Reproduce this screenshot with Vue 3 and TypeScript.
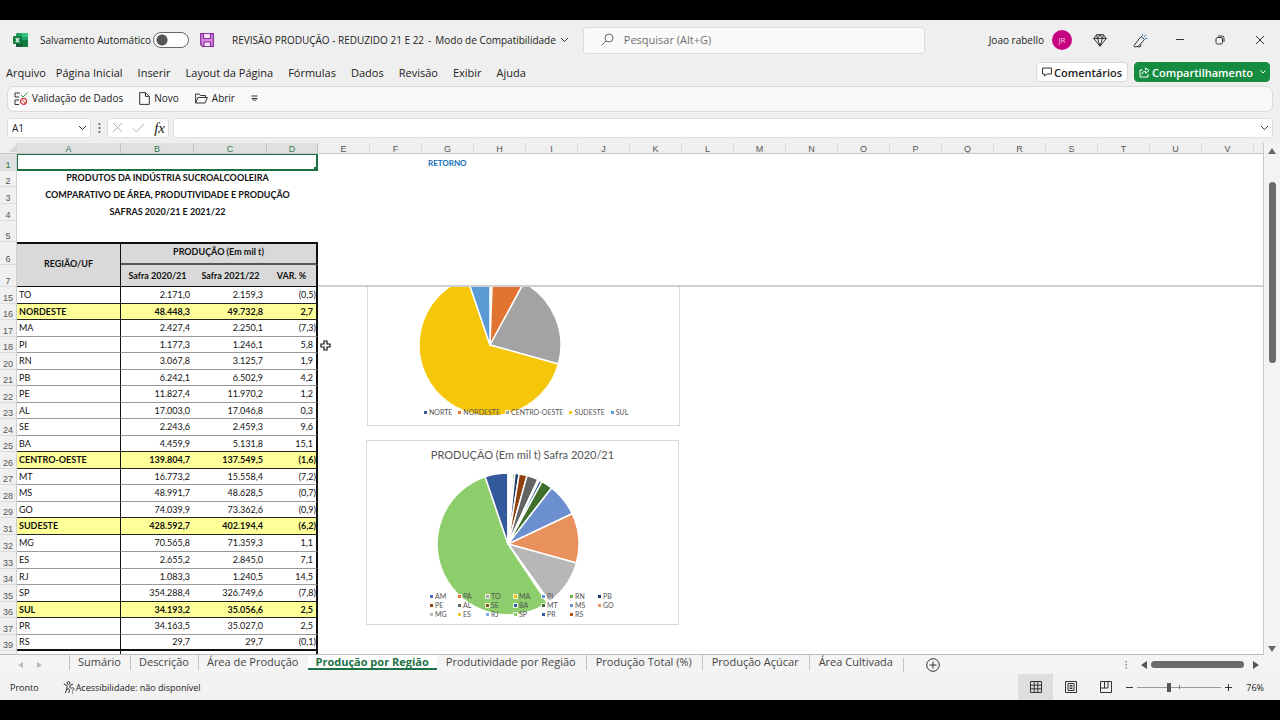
<script setup lang="ts">
import { ref } from 'vue'

interface DataRow {
  n: number
  name: string
  a: string
  b: string
  v: string
  region?: boolean
}
interface Slice {
  label: string
  value: number
  color: string
}

const menus = ['Página Inicial', 'Inserir', 'Layout da Página', 'Fórmulas', 'Dados', 'Revisão', 'Exibir', 'Ajuda']
const otherColumns = 'EFGHIJKLMNOPQRSTUV'.split('')
const sheets = [
  'Sumário',
  'Descrição',
  'Área de Produção',
  'Produção por Região',
  'Produtividade por Região',
  'Produção Total (%)',
  'Produção Açúcar',
  'Área Cultivada',
]
const activeSheet = ref('Produção por Região')
const cellName = ref('A1')
const formula = ref('')
const search = ref('')
const autosave = ref(false)
const zoom = ref(76)

const rows: DataRow[] = [
  { n: 15, name: 'TO', a: '2.171,0', b: '2.159,3', v: '(0,5)' },
  { n: 16, name: 'NORDESTE', a: '48.448,3', b: '49.732,8', v: '2,7', region: true },
  { n: 17, name: 'MA', a: '2.427,4', b: '2.250,1', v: '(7,3)' },
  { n: 18, name: 'PI', a: '1.177,3', b: '1.246,1', v: '5,8' },
  { n: 20, name: 'RN', a: '3.067,8', b: '3.125,7', v: '1,9' },
  { n: 21, name: 'PB', a: '6.242,1', b: '6.502,9', v: '4,2' },
  { n: 22, name: 'PE', a: '11.827,4', b: '11.970,2', v: '1,2' },
  { n: 23, name: 'AL', a: '17.003,0', b: '17.046,8', v: '0,3' },
  { n: 24, name: 'SE', a: '2.243,6', b: '2.459,3', v: '9,6' },
  { n: 25, name: 'BA', a: '4.459,9', b: '5.131,8', v: '15,1' },
  { n: 26, name: 'CENTRO-OESTE', a: '139.804,7', b: '137.549,5', v: '(1,6)', region: true },
  { n: 27, name: 'MT', a: '16.773,2', b: '15.558,4', v: '(7,2)' },
  { n: 28, name: 'MS', a: '48.991,7', b: '48.628,5', v: '(0,7)' },
  { n: 29, name: 'GO', a: '74.039,9', b: '73.362,6', v: '(0,9)' },
  { n: 31, name: 'SUDESTE', a: '428.592,7', b: '402.194,4', v: '(6,2)', region: true },
  { n: 32, name: 'MG', a: '70.565,8', b: '71.359,3', v: '1,1' },
  { n: 33, name: 'ES', a: '2.655,2', b: '2.845,0', v: '7,1' },
  { n: 34, name: 'RJ', a: '1.083,3', b: '1.240,5', v: '14,5' },
  { n: 35, name: 'SP', a: '354.288,4', b: '326.749,6', v: '(7,8)' },
  { n: 36, name: 'SUL', a: '34.193,2', b: '35.056,6', v: '2,5', region: true },
  { n: 37, name: 'PR', a: '34.163,5', b: '35.027,0', v: '2,5' },
  { n: 39, name: 'RS', a: '29,7', b: '29,7', v: '(0,1)' },
]

const regionSlices: Slice[] = [
  { label: 'NORTE', value: 3.5, color: '#3a5a9c' },
  { label: 'NORDESTE', value: 48.4, color: '#e07430' },
  { label: 'CENTRO-OESTE', value: 139.8, color: '#a3a3a3' },
  { label: 'SUDESTE', value: 428.6, color: '#f5c60a' },
  { label: 'SUL', value: 34.2, color: '#5b9bd5' },
]
const stateSlices: Slice[] = [
  { label: 'AM', value: 0.3, color: '#4472c4' },
  { label: 'PA', value: 1.1, color: '#ed6d31' },
  { label: 'TO', value: 2.17, color: '#a5a5a5' },
  { label: 'MA', value: 2.43, color: '#f5c000' },
  { label: 'PI', value: 1.18, color: '#5b9bd5' },
  { label: 'RN', value: 3.07, color: '#70ad47' },
  { label: 'PB', value: 6.24, color: '#1f3864' },
  { label: 'PE', value: 11.83, color: '#8e400e' },
  { label: 'AL', value: 17, color: '#636363' },
  { label: 'SE', value: 2.24, color: '#7f5f00' },
  { label: 'BA', value: 4.46, color: '#255e91' },
  { label: 'MT', value: 16.77, color: '#3f6f2b' },
  { label: 'MS', value: 48.99, color: '#6c8fd0' },
  { label: 'GO', value: 74.04, color: '#e8915c' },
  { label: 'MG', value: 70.57, color: '#b7b7b7' },
  { label: 'ES', value: 2.66, color: '#f5cd33' },
  { label: 'RJ', value: 1.08, color: '#7cafdd' },
  { label: 'SP', value: 354.29, color: '#8ecd6b' },
  { label: 'PR', value: 34.16, color: '#34589c' },
  { label: 'RS', value: 0.03, color: '#b0500e' },
]

function arcs(slices: Slice[], r: number): { d: string; color: string }[] {
  const total = slices.reduce((s, x) => s + x.value, 0)
  let acc = 0
  return slices.map((s) => {
    const a0 = (acc / total) * Math.PI * 2
    acc += s.value
    const a1 = (acc / total) * Math.PI * 2
    const p = (a: number) => `${(Math.sin(a) * r).toFixed(2)} ${(-Math.cos(a) * r).toFixed(2)}`
    return { d: `M0 0L${p(a0)}A${r} ${r} 0 ${a1 - a0 > Math.PI ? 1 : 0} 1 ${p(a1)}Z`, color: s.color }
  })
}
const regionArcs = arcs(regionSlices, 71)
const stateArcs = arcs(stateSlices, 71)
</script>

<template>
  <div class="screen">
    <header class="titlebar">
      <svg class="logo" width="15" height="14" viewBox="0 0 15 14">
        <rect x="3" y="0" width="12" height="14" rx="1" fill="#21a366" />
        <path d="M9 0h5a1 1 0 0 1 1 1v3H9z" fill="#33c481" />
        <path d="M3 7h6v7H4a1 1 0 0 1-1-1z" fill="#185c37" />
        <path d="M9 7h6v6a1 1 0 0 1-1 1H9z" fill="#107c41" />
        <rect x="0" y="3" width="9" height="8" rx="1" fill="#107c41" />
        <path d="M2.700 4.800l3.600 4.600M6.300 4.800L2.700 9.400" stroke="#fff" stroke-width="1.200" />
      </svg>
      <label class="autosave">Salvamento Automático<input v-model="autosave" type="checkbox" /></label>
      <button class="plain save" aria-label="Salvar">
        <svg width="14" height="14" viewBox="0 0 14 14">
          <path d="M.700.700h12.600v12.600H2.500L.700 11.500z" fill="#d78be0" stroke="#8c2fa0" stroke-width="1.300" />
          <path d="M3.500 1v4.500h7V1M4 13V9h6.500v4" fill="#f6e6f8" stroke="#8c2fa0" stroke-width="1.200" />
        </svg>
      </button>
      <button class="plain doc">
        <span>REVISÃO PRODUÇÃO - REDUZIDO 21 E 22</span><span>-</span><span>Modo de Compatibilidade</span>
        <svg width="9" height="6" viewBox="0 0 9 6"><path d="M1 1l3.500 3.500L8 1" class="ln" /></svg>
      </button>
      <label class="search">
        <svg width="13" height="13" viewBox="0 0 13 13">
          <circle cx="8" cy="5" r="4" fill="none" stroke="#666" /><path d="M5 8L.500 12.500" stroke="#666" />
        </svg>
        <input v-model="search" type="text" placeholder="Pesquisar (Alt+G)" />
      </label>
      <div class="account">
        <span>Joao rabello</span>
        <span class="avatar">JR</span>
      </div>
      <div class="window">
        <button class="plain" aria-label="Premium">
          <svg width="14" height="13" viewBox="0 0 14 13">
            <path d="M3.500.700h7L13.300 4.500 7 12.300.700 4.500zM.700 4.500h12.600M4.500 4.500L7 12l2.500-7.500M3.500.700l1 3.800L7 .700l2.500 3.800 1-3.800" class="ln" />
          </svg>
        </button>
        <button class="plain" aria-label="Novidades">
          <svg width="15" height="15" viewBox="0 0 15 15">
            <path d="M8 3.500l3.500 3L5 13.500l-3.500.500-.500-1.500zM4.500 13.500l2.500.500 1-2.500" class="ln" />
            <path d="M9.500 3V.800M11 4l2-2.500M12 5.500h2.500" fill="none" stroke="#3b87c8" />
          </svg>
        </button>
        <button class="plain" aria-label="Minimizar">
          <svg width="10" height="10" viewBox="0 0 10 10"><path d="M1 4.500h8" class="ln" /></svg>
        </button>
        <button class="plain" aria-label="Restaurar">
          <svg width="10" height="10" viewBox="0 0 10 10">
            <rect x="1" y="2.500" width="6.500" height="6.500" rx="1.500" class="ln" />
            <path d="M3 1h4a2 2 0 0 1 2 2v4" class="ln" />
          </svg>
        </button>
        <button class="plain" aria-label="Fechar">
          <svg width="10" height="10" viewBox="0 0 10 10"><path d="M1 1l8 8M9 1L1 9" class="ln" /></svg>
        </button>
      </div>
    </header>

    <nav class="menubar">
      <button class="plain file">Arquivo</button>
      <button v-for="m in menus" :key="m" class="plain">{{ m }}</button>
      <button class="comments">
        <svg width="10" height="10" viewBox="0 0 10 10"><path d="M.500 1h9v6H5L2.500 9V7h-2z" class="ln" /></svg>
        Comentários
      </button>
      <button class="share">
        <svg width="11" height="11" viewBox="0 0 11 11">
          <path d="M3.500 3H1v7h8V7M3 7.500c.300-2 1.500-3.300 3.500-3.300V6.300L10 3.500 6.500 1v1.800" fill="none" stroke="#fff" />
        </svg>
        Compartilhamento
        <svg class="caret" width="6" height="4" viewBox="0 0 6 4"><path d="M.500.500L3 3 5.500.500" fill="none" stroke="#fff" /></svg>
      </button>
    </nav>

    <div class="band">
      <div class="quick">
        <button class="plain">
          <svg width="14" height="13" viewBox="0 0 14 13">
            <path d="M6 1H1v4h4M1 8v4.500h4M1 8h4" class="ln" />
            <path d="M7 3l2 2 4.500-4.500" fill="none" stroke="#2e9e57" />
            <circle cx="9.500" cy="9.300" r="3" fill="#fff" stroke="#d13438" stroke-width="1.200" />
            <path d="M7.500 7.300l4 4" stroke="#d13438" />
          </svg>
          Validação de Dados
        </button>
        <button class="plain">
          <svg width="11" height="13" viewBox="0 0 11 13"><path d="M.700.600h5.800l3.800 3.800v8H.700zM6.500.600v3.800h3.800" class="ln" /></svg>
          Novo
        </button>
        <button class="plain">
          <svg width="13" height="11" viewBox="0 0 13 11">
            <path d="M.600 10V1h3.600l1.300 1.500h5v2M.600 10l2.400-5.500h9.400L10 10z" class="ln" />
          </svg>
          Abrir
        </button>
        <button class="plain" aria-label="Personalizar">
          <svg width="7" height="7" viewBox="0 0 7 7"><path d="M.500 1h6M1 3.500L3.500 6 6 3.500z" class="ln" /></svg>
        </button>
      </div>
    </div>

    <div class="formula">
      <div class="field namebox">
        <input v-model="cellName" type="text" aria-label="Caixa de nome" />
        <button class="plain" aria-label="Lista de nomes">
          <svg width="9" height="6" viewBox="0 0 9 6"><path d="M1 1l3.500 3.500L8 1" class="ln" /></svg>
        </button>
      </div>
      <svg width="3" height="12" viewBox="0 0 3 12" fill="#777"><path d="M.500 1h2v2h-2zM.500 5h2v2h-2zM.500 9h2v2h-2z" /></svg>
      <div class="field fx">
        <button class="plain" aria-label="Cancelar">
          <svg width="11" height="11" viewBox="0 0 11 11"><path d="M1 1l9 9M10 1l-9 9" stroke="#b0b0b0" /></svg>
        </button>
        <button class="plain" aria-label="Inserir">
          <svg width="13" height="10" viewBox="0 0 13 10"><path d="M1 5.500L4.500 9 12 1" fill="none" stroke="#b0b0b0" /></svg>
        </button>
        <button class="plain fn">fx</button>
      </div>
      <div class="field bar">
        <input v-model="formula" type="text" aria-label="Barra de fórmulas" />
        <button class="plain" aria-label="Expandir">
          <svg width="9" height="6" viewBox="0 0 9 6"><path d="M1 1l3.500 3.500L8 1" class="ln" /></svg>
        </button>
      </div>
    </div>

    <main class="sheet">
      <div class="grid">
        <div class="letters">
          <div class="corner"><svg width="7" height="7" viewBox="0 0 7 7"><path d="M7 0v7H0z" fill="#d5d5d5" /></svg></div>
          <div class="on wa">A</div>
          <div class="on wb">B</div>
          <div class="on wb">C</div>
          <div class="on wd">D</div>
          <div v-for="c in otherColumns" :key="c" class="other">{{ c }}</div>
        </div>

        <div class="frozen">
          <table>
            <colgroup><col class="wn" /><col class="wa" /><col class="wb" /><col class="wb" /><col class="wd" /></colgroup>
            <tbody>
              <tr class="h17"><th class="num cur">1</th><td colspan="4" class="selected"><i></i></td></tr>
              <tr class="h16"><th class="num">2</th><td colspan="4" class="head">PRODUTOS DA INDÚSTRIA SUCROALCOOLEIRA</td></tr>
              <tr class="h17"><th class="num">3</th><td colspan="4" class="head">COMPARATIVO DE ÁREA, PRODUTIVIDADE E PRODUÇÃO</td></tr>
              <tr class="h17"><th class="num">4</th><td colspan="4" class="head">SAFRAS 2020/21 E 2021/22</td></tr>
              <tr class="h21"><th class="num">5</th><td colspan="4"></td></tr>
              <tr class="h23">
                <th class="num">6</th>
                <th rowspan="2" class="gray first">REGIÃO/UF</th>
                <th colspan="3" class="gray group">PRODUÇÃO (Em mil t)</th>
              </tr>
              <tr class="h22">
                <th class="num">7</th>
                <th class="gray sub">Safra 2020/21</th>
                <th class="gray sub">Safra 2021/22</th>
                <th class="gray sub edge">VAR. %</th>
              </tr>
            </tbody>
          </table>
          <div class="beside"><a href="#">RETORNO</a></div>
        </div>

        <div class="pane">
          <table class="data">
            <colgroup><col class="wn" /><col class="wa" /><col class="wb" /><col class="wb" /><col class="wd" /></colgroup>
            <tbody>
              <tr v-for="(r, i) in rows" :key="r.n" :class="{ region: r.region, above: rows[i + 1]?.region, last: i === rows.length - 1 }">
                <th class="num">{{ r.n }}</th>
                <td class="name">{{ r.name }}</td>
                <td>{{ r.a }}</td>
                <td>{{ r.b }}</td>
                <td class="var" :class="{ neg: r.v.startsWith('(') }">{{ r.v }}</td>
              </tr>
              <tr><th class="num"></th><td class="name"></td><td></td><td></td><td class="var"></td></tr>
            </tbody>
          </table>
          <section class="chart c1">
            <svg class="pie p1" width="146" height="146" viewBox="-73 -73 146 146">
              <path v-for="a in regionArcs" :key="a.d" :d="a.d" :fill="a.color" stroke="#fff" stroke-width="1.500" stroke-linejoin="round" />
            </svg>
            <ul class="legend line">
              <li v-for="s in regionSlices" :key="s.label"><i :style="{ background: s.color }"></i>{{ s.label }}</li>
            </ul>
          </section>
          <section class="chart c2">
            <h2>PRODUÇÃO (Em mil t) Safra 2020/21</h2>
            <svg class="pie p2" width="146" height="146" viewBox="-73 -73 146 146">
              <path v-for="a in stateArcs" :key="a.d" :d="a.d" :fill="a.color" stroke="#fff" stroke-width="1.500" stroke-linejoin="round" />
            </svg>
            <ul class="legend many">
              <li v-for="s in stateSlices" :key="s.label"><i :style="{ background: s.color }"></i>{{ s.label }}</li>
            </ul>
          </section>
          <svg class="cursor" width="11" height="11" viewBox="0 0 11 11">
            <path d="M4 1h3v3h3v3H7v3H4V7H1V4h3z" fill="#fff" stroke="#111" stroke-width="1.200" />
          </svg>
        </div>
      </div>
      <div class="vscroll">
        <svg width="8" height="6" viewBox="0 0 8 6"><path d="M4 0l4 6H0z" fill="#666" /></svg>
        <div class="vtrack"><div class="vthumb"></div></div>
        <svg width="8" height="6" viewBox="0 0 8 6"><path d="M4 6l4-6H0z" fill="#666" /></svg>
      </div>
    </main>

    <div class="tabs">
      <div class="arrows">
        <svg width="5" height="6" viewBox="0 0 5 6"><path d="M5 0v6L0 3z" fill="#bbb" /></svg>
        <svg width="5" height="6" viewBox="0 0 5 6"><path d="M0 0v6l5-3z" fill="#bbb" /></svg>
      </div>
      <button v-for="s in sheets" :key="s" class="tab" :class="{ active: s === activeSheet }" @click="activeSheet = s">{{ s }}</button>
      <button class="plain add" aria-label="Nova planilha">
        <svg width="14" height="14" viewBox="0 0 14 14"><circle cx="7" cy="7" r="6.300" class="ln" /><path d="M7 3.500v7M3.500 7h7" class="ln" /></svg>
      </button>
      <div class="hscroll">
        <svg width="3" height="10" viewBox="0 0 3 10" fill="#888"><path d="M.500 1h1.500v1.500H.500zM.500 4h1.500v1.500H.500zM.500 7h1.500v1.500H.500z" /></svg>
        <svg class="l" width="6" height="8" viewBox="0 0 6 8"><path d="M6 0v8L0 4z" fill="#555" /></svg>
        <div class="hthumb"></div>
        <svg class="r" width="6" height="8" viewBox="0 0 6 8"><path d="M0 0v8l6-4z" fill="#555" /></svg>
      </div>
    </div>

    <footer class="status">
      <span>Pronto</span>
      <span class="access">
        <svg width="12" height="13" viewBox="0 0 12 13">
          <circle cx="5.500" cy="2" r="1.400" class="ln" />
          <path d="M.800 3l3.200 1.500v2.500L2.500 12M10 3L7 4.500V7M4 8.500l1.500-1 1 1.500L5.800 12" class="ln" />
          <path d="M8 7.800c.300-1.500 3.200-1.300 3 .300-.200 1-1.500 1-1.500 2.200M9.500 11.500v1" class="ln" />
        </svg>
        Acessibilidade: não disponível
      </span>
      <div class="views">
        <button class="plain on" aria-label="Normal">
          <svg width="12" height="12" viewBox="0 0 12 12"><path d="M.500.500h11v11H.500zM.500 4.200h11M.500 7.800h11M4.200.500v11M7.800.500v11" class="ln" /></svg>
        </button>
        <button class="plain" aria-label="Layout da Página">
          <svg width="12" height="12" viewBox="0 0 12 12"><path d="M.500.500h11v11H.500zM3 2.500h6v7H3zM4.500 4.500h3M4.500 6h3M4.500 7.500h3" class="ln" /></svg>
        </button>
        <button class="plain" aria-label="Quebra de Página">
          <svg width="12" height="12" viewBox="0 0 12 12"><path d="M.500.500h11v11H.500zM.500 7h7.500V.500M4.500.500V7" class="ln" /></svg>
        </button>
      </div>
      <div class="zoom">
        <button class="plain" aria-label="Reduzir"><svg width="7" height="7" viewBox="0 0 7 7"><path d="M0 3.500h7" class="ln" /></svg></button>
        <input v-model="zoom" type="range" min="10" max="190" aria-label="Zoom" />
        <button class="plain" aria-label="Ampliar"><svg width="7" height="7" viewBox="0 0 7 7"><path d="M0 3.500h7M3.500 0v7" class="ln" /></svg></button>
        <span>{{ zoom }}%</span>
      </div>
    </footer>
  </div>
</template>

<style>
html,
body {
  background: #000;
}
</style>

<style scoped>
.screen {
  box-sizing: border-box;
  height: 100vh;
  padding: 20px 0;
  background: #000;
  display: flex;
  flex-direction: column;
  overflow: hidden;
  font-family: 'Open Sans', 'Noto Sans', sans-serif;
  font-size: 10px;
  color: #222;
}
.screen > * {
  background: #efefef;
  flex: none;
}
button,
input {
  font: inherit;
  color: inherit;
  min-width: 0;
}
svg {
  display: block;
  flex: none;
}
.ln {
  fill: none;
  stroke: #333;
}
.plain {
  border: 0;
  padding: 0;
  background: none;
  display: flex;
  align-items: center;
  white-space: nowrap;
}
input[type='text'] {
  border: 0;
  padding: 0;
  outline: 0;
  background: none;
  flex: 1;
}

.titlebar {
  height: 40px;
  display: flex;
  align-items: center;
  padding-left: 13px;
  white-space: nowrap;
}
.autosave {
  display: flex;
  align-items: center;
  gap: 2px;
  margin-left: 12px;
}
.autosave input {
  appearance: none;
  box-sizing: border-box;
  margin: 0;
  width: 36px;
  height: 16px;
  border: 1px solid #666;
  border-radius: 8px;
  background: radial-gradient(circle at 8px 7px, #555 5px, #fff 6px);
}
.save {
  margin-left: 11px;
}
.doc {
  margin-left: 18px;
  gap: 4px;
}
.search {
  box-sizing: border-box;
  flex: none;
  width: 27%;
  height: 27px;
  margin-left: 14px;
  padding: 0 0 2px 17px;
  display: flex;
  align-items: center;
  gap: 10px;
  background: #fafafa;
  border: 1px solid #dcdcdc;
  border-radius: 3px;
  font-size: 11px;
}
.search input::placeholder {
  color: #707070;
  opacity: 1;
}
.account {
  margin-left: auto;
  display: flex;
  align-items: center;
  gap: 8px;
}
.avatar {
  width: 20px;
  height: 20px;
  line-height: 20px;
  border-radius: 50%;
  background: #c6047f;
  color: #f6c6e2;
  text-align: center;
  font-size: 8px;
}
.window {
  display: flex;
  margin-left: 8px;
}
.window button {
  width: 40px;
  height: 30px;
  justify-content: center;
}

.menubar {
  box-sizing: border-box;
  height: 26px;
  display: flex;
  align-items: center;
  gap: 15px;
  padding: 0 10px 2px 6px;
  font-size: 11px;
}
.menubar .file {
  margin-right: -5px;
}
.comments,
.share {
  box-sizing: border-box;
  height: 20px;
  display: flex;
  align-items: center;
  gap: 2px;
  border: 1px solid #d8d8d8;
  border-radius: 4px;
  background: #fff;
  padding: 0 5px;
  font-weight: 600;
  white-space: nowrap;
}
.comments {
  margin-left: auto;
  margin-right: -9px;
}
.share {
  background: #168c40;
  border-color: #168c40;
  color: #fff;
  padding: 0 3px 0 4px;
}
.caret {
  margin-left: 5px;
}

.band {
  padding: 0 7px;
}
.quick {
  box-sizing: border-box;
  height: 26px;
  display: flex;
  align-items: center;
  gap: 16px;
  padding: 0 0 2px 6px;
  background: #f9f9f9;
  border: 1px solid #d9d9d9;
  border-radius: 7px;
}
.quick button {
  gap: 4px;
}

.formula {
  height: 31px;
  display: flex;
  align-items: center;
  gap: 4px;
  padding: 0 7px;
}
.field {
  box-sizing: border-box;
  height: 20px;
  display: flex;
  align-items: center;
  background: #fff;
  border: 1px solid #dedede;
  border-radius: 3px;
  padding: 0 3px 0 4px;
}
.namebox {
  width: 84px;
  margin-right: 3px;
}
.fx {
  width: 62px;
  margin-left: 2px;
  justify-content: space-between;
}
.fn {
  font: italic 15px/16px 'Liberation Serif', serif;
}
.bar {
  flex: 1;
}

.sheet {
  flex: 1 1 0 !important;
  min-height: 0;
  display: flex;
}
.grid {
  flex: 1;
  min-width: 0;
  display: flex;
  flex-direction: column;
  border-right: 1px solid #c8c8c8;
  border-bottom: 1px solid #bbb;
}
.letters {
  box-sizing: border-box;
  height: 11px;
  flex: none;
  display: flex;
  overflow: hidden;
  font: 9px/12px 'Liberation Sans', sans-serif;
  text-align: center;
  color: #555;
  border-bottom: 1px solid #c8c8c8;
}
.letters div {
  box-sizing: border-box;
  flex: none;
  border-right: 1px solid #d8d8d8;
}
.letters .on {
  background: #e0e0e0;
  color: #2f7a50;
  border-right-color: #c0c0c0;
}
.letters .corner {
  width: 17px;
  display: flex;
  justify-content: flex-end;
  align-items: center;
}
.other {
  width: 52px;
}
.wn {
  width: 17px;
}
.wa {
  width: 104px;
}
.wb {
  width: 73px;
}
.wd {
  width: 51px;
}
.frozen,
.pane {
  display: flex;
  background: #fff;
}
.frozen {
  flex: none;
}
.pane {
  position: relative;
  flex: 1;
  min-height: 0;
  overflow: hidden;
  align-items: flex-start;
}
.beside {
  flex: 1;
  border-bottom: 2px solid #cfcfcf;
}
.beside a {
  display: block;
  width: 36px;
  margin: 4px 0 0 110px;
  font: bold 8px/10px Lato, sans-serif;
  color: #0f6cb4;
  text-decoration: none;
}
table {
  flex: none;
  width: 318px;
  table-layout: fixed;
  border-spacing: 0;
  font: 9px/10px Lato, sans-serif;
  color: #111;
}
td,
th {
  box-sizing: border-box;
  padding: 0;
  overflow: hidden;
  white-space: nowrap;
}
.num {
  background: #f0f0f0;
  border-right: 1px solid #cfcfcf;
  border-bottom: 1px solid #dcdcdc;
  vertical-align: bottom;
  text-align: center;
  font: 9px/10px 'Liberation Sans', sans-serif;
  color: #555;
}
.cur {
  background: #e0e0e0;
  color: #2f7a50;
}
.selected {
  border: 1px solid #1e7145;
  border-bottom-width: 2px;
  border-right-width: 2px;
  text-align: right;
  vertical-align: bottom;
}
.selected i {
  display: block;
  margin-left: auto;
  width: 2px;
  height: 2px;
  background: #1e7145;
}
.h16 {
  height: 16px;
}
.h17 {
  height: 17px;
}
.h21 {
  height: 21px;
}
.h22 {
  height: 22px;
}
.h23 {
  height: 23px;
}
.head {
  text-align: center;
  font-weight: bold;
  padding-bottom: 2px;
}
.gray {
  background: #d9d9d9;
  font-weight: bold;
  border-bottom: 1px solid #111;
}
.first {
  border-top: 2px solid #111;
  border-right: 1px solid #111;
  padding-bottom: 3px;
}
.group {
  border-top: 2px solid #111;
  border-right: 2px solid #111;
  border-bottom: 2px solid #555;
  padding-bottom: 3px;
}
.edge {
  border-right: 2px solid #111;
}
.data tr {
  height: 16px;
}
.data tr:nth-child(odd),
.data tr:nth-child(16) {
  height: 17px;
}
.data td {
  border-bottom: 1px solid #999;
  text-align: right;
  padding-right: 4px;
}
.data .name {
  text-align: left;
  padding-left: 2px;
  border-right: 1px solid #111;
}
.data .var {
  border-right: 2px solid #111;
  padding-right: 3px;
}
.data .neg {
  padding-right: 0;
}
.data .region td {
  background: #ffff99;
  border-bottom-color: #222;
  font-weight: bold;
}
.data .above td {
  border-bottom-color: #222;
}
.data .last td {
  border-bottom: 2px solid #111;
}

.chart {
  position: absolute;
  box-sizing: border-box;
  width: 313px;
  height: 185px;
  border: 1px solid #d9d9d9;
  background: #fff;
  font-family: Lato, sans-serif;
  color: #555;
}
.c1 {
  left: 367px;
  top: -46px;
}
.c2 {
  left: 366px;
  top: 153px;
}
.chart h2 {
  margin: 7px 0 0;
  font-size: 11px;
  line-height: 14px;
  font-weight: normal;
  text-align: center;
}
.pie {
  position: absolute;
}
.p1 {
  left: 49px;
  top: 30px;
}
.p2 {
  left: 68px;
  top: 30px;
}
.legend {
  position: absolute;
  margin: 0;
  padding: 0;
  list-style: none;
  font-size: 7px;
  line-height: 9px;
}
.legend li {
  display: flex;
  align-items: center;
  gap: 2px;
}
.legend i {
  width: 3px;
  height: 3px;
  outline: 1px solid #fffc;
}
.line {
  left: 56px;
  bottom: 8px;
  display: flex;
  gap: 6px;
}
.many {
  left: 63px;
  bottom: 5px;
  display: grid;
  grid-template-columns: repeat(7, 28px);
}
.cursor {
  position: absolute;
  left: 320px;
  top: 53px;
}

.vscroll {
  width: 16px;
  display: flex;
  flex-direction: column;
  align-items: center;
  padding: 5px 0 3px;
  background: #f3f3f3;
}
.vtrack {
  flex: 1;
  padding-top: 28px;
}
.vthumb {
  width: 7px;
  height: 39%;
  border-radius: 4px;
  background: #6b6b6b;
}

.screen > .tabs {
  height: 19px;
  display: flex;
  align-items: center;
  background: #f4f4f4;
}
.arrows {
  width: 69px;
  box-sizing: border-box;
  padding-left: 18px;
  display: flex;
  gap: 14px;
}
.tab {
  box-sizing: border-box;
  height: 15px;
  align-self: flex-start;
  border: 0;
  border-left: 1px solid #c4c4c4;
  background: none;
  padding: 0 9px 2px 8px;
  font-size: 11px;
  line-height: 13px;
  color: #444;
  white-space: nowrap;
}
.tab.active {
  background: #fff;
  border-left: 0;
  border-bottom: 2px solid #1e7145;
  font-weight: bold;
  color: #1e7145;
  padding: 0 8px;
}
.tab.active ~ .tab {
  padding: 0 10px 2px 9px;
}
.tab.active + .tab {
  border-left: 0;
}
.add {
  border-left: 1px solid #c4c4c4;
  padding-left: 22px;
}
.hscroll {
  margin-left: auto;
  padding-right: 21px;
  display: flex;
  align-items: center;
}
.hscroll .l {
  margin-left: 13px;
}
.hthumb {
  width: 93px;
  height: 7px;
  margin: 0 9px 0 4px;
  border-radius: 4px;
  background: #6b6b6b;
}

.screen > .status {
  height: 26px;
  display: flex;
  align-items: center;
  padding: 0 16px 0 10px;
  background: #f2f2f2;
  font-size: 9px;
  white-space: nowrap;
}
.access {
  margin-left: 24px;
  display: flex;
  align-items: center;
  gap: 1px;
}
.views {
  margin-left: auto;
  display: flex;
  align-self: stretch;
}
.views button {
  width: 35px;
  justify-content: center;
}
.views .on {
  background: #dedede;
}
.zoom {
  display: flex;
  align-items: center;
  gap: 4px;
  margin-left: 3px;
}
.zoom input {
  appearance: none;
  width: 84px;
  height: 10px;
  margin: 0;
  background:
    linear-gradient(#777, #777) 50% 50% / 1px 4px no-repeat,
    linear-gradient(#999, #999) 50% 50% / 100% 1px no-repeat;
}
.zoom input::-webkit-slider-thumb {
  appearance: none;
  width: 4px;
  height: 9px;
  background: #555;
}
.zoom span {
  margin-left: 10px;
}
</style>
